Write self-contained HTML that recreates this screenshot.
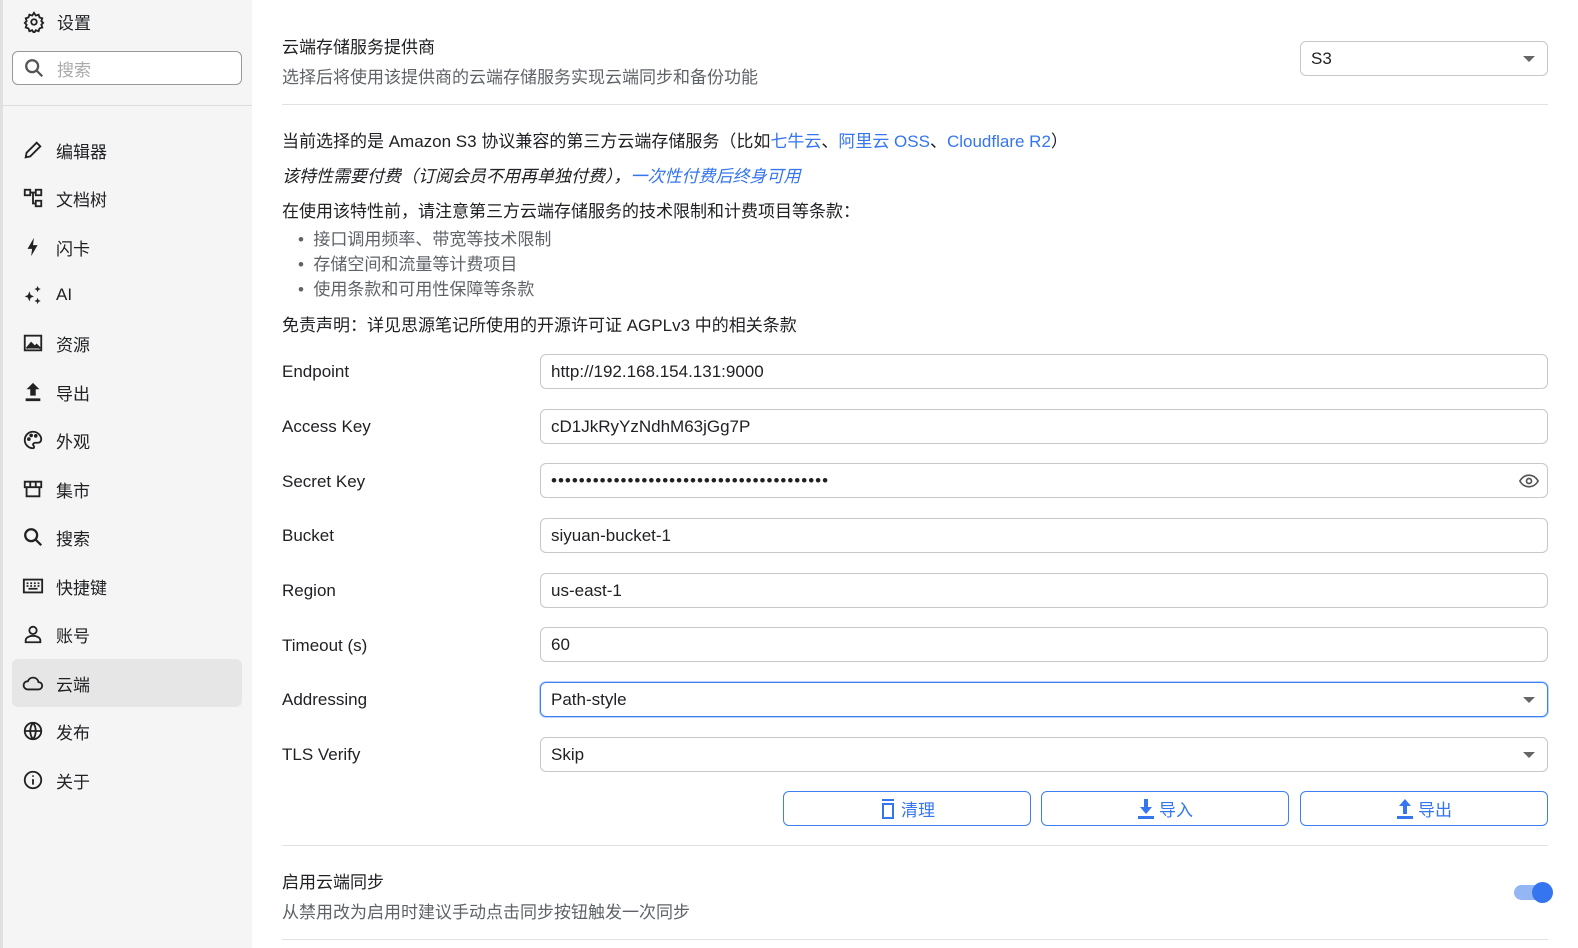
<!DOCTYPE html>
<html style="width:1578px;height:948px;overflow:hidden"><head><meta charset="utf-8"><style>
*{box-sizing:border-box;margin:0;padding:0}
body{width:1578px;height:948px;overflow:hidden;background:#fff;font-family:"Liberation Sans","Noto Sans CJK SC",sans-serif;color:#202124;font-size:17px;position:relative}
.side{position:absolute;left:0;top:0;width:252px;height:948px;background:#f5f5f5;border-left:3px solid #e0e0e0}
.abs{position:absolute}
.item{position:absolute;left:12px;width:230px;height:48px;display:flex;align-items:center;padding-left:10px}
.item svg{width:22px;height:22px;margin-right:12px}
.item.act{background:#e6e6e6;border-radius:6px}
.lbl{position:absolute;left:282px;font-size:17px;white-space:nowrap}
.inp{position:absolute;left:540px;width:1008px;height:35px;border:1px solid #c8c8c8;border-radius:6px;padding-left:10px;display:flex;align-items:center;font-size:17px;overflow:hidden}
.caret{position:absolute;right:12px;top:14px;width:0;height:0;border-left:6px solid transparent;border-right:6px solid transparent;border-top:6px solid #666}
.btn{position:absolute;top:791px;width:248px;height:35px;border:1px solid #3d7ef2;border-radius:6px;color:#3575f0;display:flex;align-items:center;justify-content:center;font-size:17px}
.btn svg{width:18px;height:20px;margin-right:4px}
.hr{position:absolute;left:282px;width:1266px;height:1px;background:#e2e2e2}
.blue{color:#3575f0}
.gray{color:#5f6368}
</style></head><body>
<div class="side">
 <div class="abs" style="left:20px;top:9px;display:flex;align-items:center">
  <svg width="22" height="22" viewBox="0 0 24 24" fill="none" stroke="#222" stroke-width="2"><circle cx="12" cy="12" r="3"/><path d="M12 2l2 3 3-1 1 3 3 1-1 3 2 2-2 2 1 3-3 1-1 3-3-1-2 3-2-3-3 1-1-3-3-1 1-3-2-2 2-2-1-3 3-1 1-3 3 1z"/></svg>
  <span style="margin-left:12px">设置</span></div>
 <div class="abs" style="left:9px;top:51px;width:230px;height:34px;border:1px solid #999;border-radius:6px;background:#fff;display:flex;align-items:center;padding-left:10px">
  <svg width="22" height="22" viewBox="0 0 24 24" fill="none" stroke="#555" stroke-width="2.5"><circle cx="10" cy="10" r="6.5"/><path d="M15 15l6 6"/></svg>
  <span style="margin-left:12px;color:#aaa">搜索</span></div>
 <div class="abs" style="left:0;top:105px;width:249px;height:1px;background:#ddd"></div>
</div>
<div class="item" style="top:126px"><svg viewBox="0 0 24 24" fill="none" stroke="#222" stroke-width="2"><path d="M4 20l1-5L16 4l4 4L9 19z"/></svg>编辑器</div>
<div class="item" style="top:174px"><svg viewBox="0 0 24 24" fill="none" stroke="#222" stroke-width="2"><rect x="3" y="3" width="6" height="6"/><rect x="15" y="3" width="6" height="6"/><rect x="15" y="15" width="6" height="6"/><path d="M9 6h6M12 6v12h3"/></svg>文档树</div>
<div class="item" style="top:223px"><svg viewBox="0 0 24 24" fill="#222"><path d="M13 2L6 14h5l-1 8 7-12h-5z"/></svg>闪卡</div>
<div class="item" style="top:271px"><svg viewBox="0 0 24 24" fill="#222"><path d="M8 8l1.5 4L13 13.5 9.5 15 8 19l-1.5-4L3 13.5 6.5 12z"/><path d="M17 2l1 2.5 2.5 1-2.5 1L17 9l-1-2.5-2.5-1 2.5-1zM17 15l1 2.5 2.5 1-2.5 1L17 22l-1-2.5-2.5-1 2.5-1z"/></svg>AI</div>
<div class="item" style="top:319px"><svg viewBox="0 0 24 24" fill="none" stroke="#222" stroke-width="2"><rect x="3" y="4" width="18" height="16"/><path d="M5 18l5-6 4 4 2-2 4 4" fill="#222"/></svg>资源</div>
<div class="item" style="top:368px"><svg viewBox="0 0 24 24" fill="#222"><path d="M12 2l7 7h-4v7H9V9H5zM4 19h16v3H4z"/></svg>导出</div>
<div class="item" style="top:416px"><svg viewBox="0 0 24 24" fill="none" stroke="#222" stroke-width="2"><path d="M12 3a9 9 0 100 18c1.5 0 1.5-2 .5-3s0-3 2-3h3a3.5 3.5 0 003.5-3.5C21 7 17 3 12 3z"/><circle cx="7.5" cy="11" r="1" fill="#222"/><circle cx="10" cy="7" r="1" fill="#222"/><circle cx="15" cy="7.5" r="1" fill="#222"/></svg>外观</div>
<div class="item" style="top:465px"><svg viewBox="0 0 24 24" fill="none" stroke="#222" stroke-width="2"><path d="M3 4h18v6H3zM5 10v10h14V10M9 4v6M15 4v6"/></svg>集市</div>
<div class="item" style="top:513px"><svg viewBox="0 0 24 24" fill="none" stroke="#222" stroke-width="2.5"><circle cx="10" cy="10" r="6.5"/><path d="M15 15l6 6"/></svg>搜索</div>
<div class="item" style="top:562px"><svg viewBox="0 0 24 24" fill="none" stroke="#222" stroke-width="2"><rect x="2" y="5" width="20" height="14"/><path d="M5 9h2M9 9h2M13 9h2M17 9h2M5 12h2M9 12h2M13 12h2M17 12h2M7 15h10"/></svg>快捷键</div>
<div class="item" style="top:610px"><svg viewBox="0 0 24 24" fill="none" stroke="#222" stroke-width="2"><circle cx="12" cy="8" r="4"/><path d="M4 21v-2c0-3 4-5 8-5s8 2 8 5v2z"/></svg>账号</div>
<div class="item act" style="top:659px"><svg viewBox="0 0 24 24" fill="none" stroke="#222" stroke-width="2"><path d="M6 19h12a4 4 0 000-8 6 6 0 00-11.5-1A4.5 4.5 0 006 19z"/></svg>云端</div>
<div class="item" style="top:707px"><svg viewBox="0 0 24 24" fill="none" stroke="#222" stroke-width="2"><circle cx="12" cy="12" r="9"/><path d="M3 12h18M12 3c-4 5-4 13 0 18M12 3c4 5 4 13 0 18"/></svg>发布</div>
<div class="item" style="top:756px"><svg viewBox="0 0 24 24" fill="none" stroke="#222" stroke-width="2"><circle cx="12" cy="12" r="9"/><path d="M12 11v6M12 7v1.5"/></svg>关于</div>

<div class="lbl" style="top:33px">云端存储服务提供商</div>
<div class="lbl gray" style="top:63px">选择后将使用该提供商的云端存储服务实现云端同步和备份功能</div>
<div class="inp" style="left:1300px;width:248px;top:41px;height:35px">S3<div class="caret"></div></div>
<div class="hr" style="top:104px"></div>
<div class="lbl" style="top:127px">当前选择的是 Amazon S3 协议兼容的第三方云端存储服务（比如<span class="blue">七牛云</span>、<span class="blue">阿里云 OSS</span>、<span class="blue">Cloudflare R2</span>）</div>
<div class="lbl" style="top:162px;font-style:italic">该特性需要付费（订阅会员不用再单独付费），<span class="blue">一次性付费后终身可用</span></div>
<div class="lbl" style="top:197px">在使用该特性前，请注意第三方云端存储服务的技术限制和计费项目等条款：</div>
<div class="lbl gray" style="top:227px;left:298px;line-height:25px">• &nbsp;接口调用频率、带宽等技术限制<br>• &nbsp;存储空间和流量等计费项目<br>• &nbsp;使用条款和可用性保障等条款</div>
<div class="lbl" style="top:311px">免责声明：详见思源笔记所使用的开源许可证 AGPLv3 中的相关条款</div>

<div class="lbl" style="top:362px">Endpoint</div><div class="inp" style="top:354px">http://192.168.154.131:9000</div>
<div class="lbl" style="top:417px">Access Key</div><div class="inp" style="top:409px">cD1JkRyYzNdhM63jGg7P</div>
<div class="lbl" style="top:472px">Secret Key</div><div class="inp" style="top:463px;letter-spacing:1px">••••••••••••••••••••••••••••••••••••••••<svg style="position:absolute;right:8px;top:9px" width="20" height="16" viewBox="0 0 24 18" fill="none" stroke="#555" stroke-width="2"><path d="M1 9c3-5 7-7 11-7s8 2 11 7c-3 5-7 7-11 7S4 14 1 9z"/><circle cx="12" cy="9" r="3"/></svg></div>
<div class="lbl" style="top:526px">Bucket</div><div class="inp" style="top:518px">siyuan-bucket-1</div>
<div class="lbl" style="top:581px">Region</div><div class="inp" style="top:573px">us-east-1</div>
<div class="lbl" style="top:636px">Timeout (s)</div><div class="inp" style="top:627px">60</div>
<div class="lbl" style="top:690px">Addressing</div><div class="inp" style="top:682px;border-color:#3d7ef2;box-shadow:0 0 0 1px #bcd3fb">Path-style<div class="caret"></div></div>
<div class="lbl" style="top:745px">TLS Verify</div><div class="inp" style="top:737px">Skip<div class="caret"></div></div>

<div class="btn" style="left:783px"><svg viewBox="0 0 18 20" fill="#3575f0"><rect x="3" y="0" width="12" height="2"/><path d="M3 4h12v16H3zM5 6v12h8V6z" fill-rule="evenodd"/></svg>清理</div>
<div class="btn" style="left:1041px"><svg viewBox="0 0 18 20" fill="#3575f0"><path d="M7 0h4v8h4l-6 7-6-7h4z"/><rect x="1" y="17" width="16" height="3"/></svg>导入</div>
<div class="btn" style="left:1300px"><svg viewBox="0 0 18 20" fill="#3575f0"><path d="M9 0l6 7h-4v8H7V7H3z"/><rect x="1" y="17" width="16" height="3"/></svg>导出</div>
<div class="hr" style="top:845px"></div>
<div class="lbl" style="top:868px">启用云端同步</div>
<div class="lbl gray" style="top:898px">从禁用改为启用时建议手动点击同步按钮触发一次同步</div>
<div class="abs" style="left:1514px;top:885px;width:30px;height:15px;border-radius:8px;background:#93b6f5"></div>
<div class="abs" style="left:1532px;top:882px;width:21px;height:21px;border-radius:50%;background:#3575f0"></div>
<div class="hr" style="top:939px"></div>
</body></html>
